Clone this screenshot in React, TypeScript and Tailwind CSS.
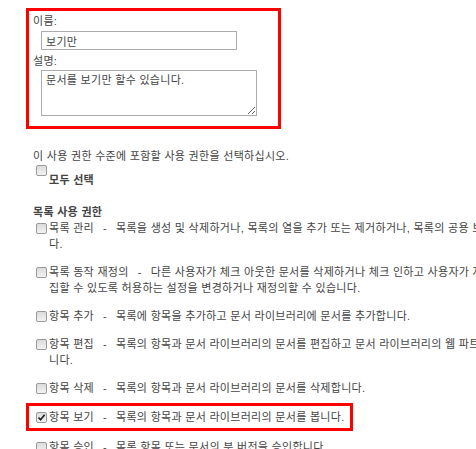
import React from 'react';

type Permission = {
  name: string;
  lines: string[];
  checked?: boolean;
  highlight?: boolean;
};

const permissions: Permission[] = [
  {
    name: '목록 관리',
    lines: [
      '목록을 생성 및 삭제하거나, 목록의 열을 추가 또는 제거하거나, 목록의 공용 보기를 추가 또는 제거합니',
      '다.',
    ],
  },
  {
    name: '목록 동작 재정의',
    lines: [
      '다른 사용자가 체크 아웃한 문서를 삭제하거나 체크 인하고 사용자가 자신의 항목만 읽거나 편',
      '집할 수 있도록 허용하는 설정을 변경하거나 재정의할 수 있습니다.',
    ],
  },
  { name: '항목 추가', lines: ['목록에 항목을 추가하고 문서 라이브러리에 문서를 추가합니다.'] },
  {
    name: '항목 편집',
    lines: [
      '목록의 항목과 문서 라이브러리의 문서를 편집하고 문서 라이브러리의 웹 파트 페이지를 사용자 지정합',
      '니다.',
    ],
  },
  { name: '항목 삭제', lines: ['목록의 항목과 문서 라이브러리의 문서를 삭제합니다.'] },
  {
    name: '항목 보기',
    lines: ['목록의 항목과 문서 라이브러리의 문서를 봅니다.'],
    checked: true,
    highlight: true,
  },
  { name: '항목 승인', lines: ['목록 항목 또는 문서의 부 버전을 승인합니다.'] },
];

const Checkbox: React.FC<{ checked?: boolean; className?: string }> = ({
  checked = false,
  className = '',
}) => (
  <span
    className={`flex w-[11px] h-[11px] shrink-0 items-center justify-center rounded-[2px] border border-[#9a9a9a] bg-gradient-to-b from-[#dcdcdc] to-[#f2f2f2] ${className}`}
  >
    {checked && (
      <svg width="9" height="9" viewBox="0 0 9 9">
        <path d="M1.5 4.5 L3.6 6.8 L7.6 1.8" fill="none" stroke="#222" strokeWidth="1.7" />
      </svg>
    )}
  </span>
);

const PermissionRow: React.FC<{ item: Permission }> = ({ item }) => (
  <div className="flex items-start whitespace-nowrap">
    <Checkbox checked={item.checked} className="mt-[2.5px]" />
    <div className="ml-[2px]">
      {item.lines.map((line, i) => (
        <div key={i}>
          {i === 0 && (
            <>
              {item.name}
              <span className="px-[9px]">-</span>
            </>
          )}
          {line}
        </div>
      ))}
    </div>
  </div>
);

export default function App() {
  return (
    <div className="w-[476px] h-[449px] overflow-hidden bg-white pl-[26px] pt-[8px] text-[11px] leading-[16px] tracking-[0.3px] text-[#444] font-['Liberation_Sans','Noto_Sans_CJK_KR',sans-serif]">
      {/* 이름 / 설명 */}
      <div className="w-[255px] h-[121px] border-[3px] border-[#ff0000] pl-[4px] pt-[3px]">
        <div className="leading-[15px]">이름:</div>
        <input
          readOnly
          value="보기만"
          className="mt-[2px] ml-[8px] block w-[196px] h-[19px] border border-[#ababab] px-[4px] text-[11px] tracking-[0.3px] text-[#444] outline-none font-['Liberation_Sans','Noto_Sans_CJK_KR',sans-serif]"
        />
        <div className="mt-[4px] leading-[15px]">설명:</div>
        <textarea
          readOnly
          value="문서를 보기만 할수 있습니다."
          className="mt-[1px] ml-[8px] block w-[216px] h-[46px] border border-[#ababab] px-[4px] pt-[2px] text-[11px] leading-[15px] tracking-[0.3px] text-[#444] outline-none font-['Liberation_Sans','Noto_Sans_CJK_KR',sans-serif]"
        />
      </div>

      <div className="mt-[20px] pl-[7px] leading-[15px]">
        이 사용 권한 수준에 포함할 사용 권한을 선택하십시오.
      </div>

      <div className="mt-[1px] pl-[10px] flex items-start">
        <Checkbox />
        <span className="mt-[8px] ml-[2px] font-bold leading-[15px]">모두 선택</span>
      </div>

      <div className="mt-[17px] pl-[7px] font-bold leading-[15px]">목록 사용 권한</div>

      <div className="flex flex-col gap-[12px]">
        {permissions.map((item) =>
          item.highlight ? (
            <div
              key={item.name}
              className="-mt-[5px] -mb-[4px] w-[327px] border-[3px] border-[#ff0000] pl-[7px] py-[3px]"
            >
              <PermissionRow item={item} />
            </div>
          ) : (
            <div key={item.name} className="pl-[10px]">
              <PermissionRow item={item} />
            </div>
          )
        )}
      </div>
    </div>
  );
}
